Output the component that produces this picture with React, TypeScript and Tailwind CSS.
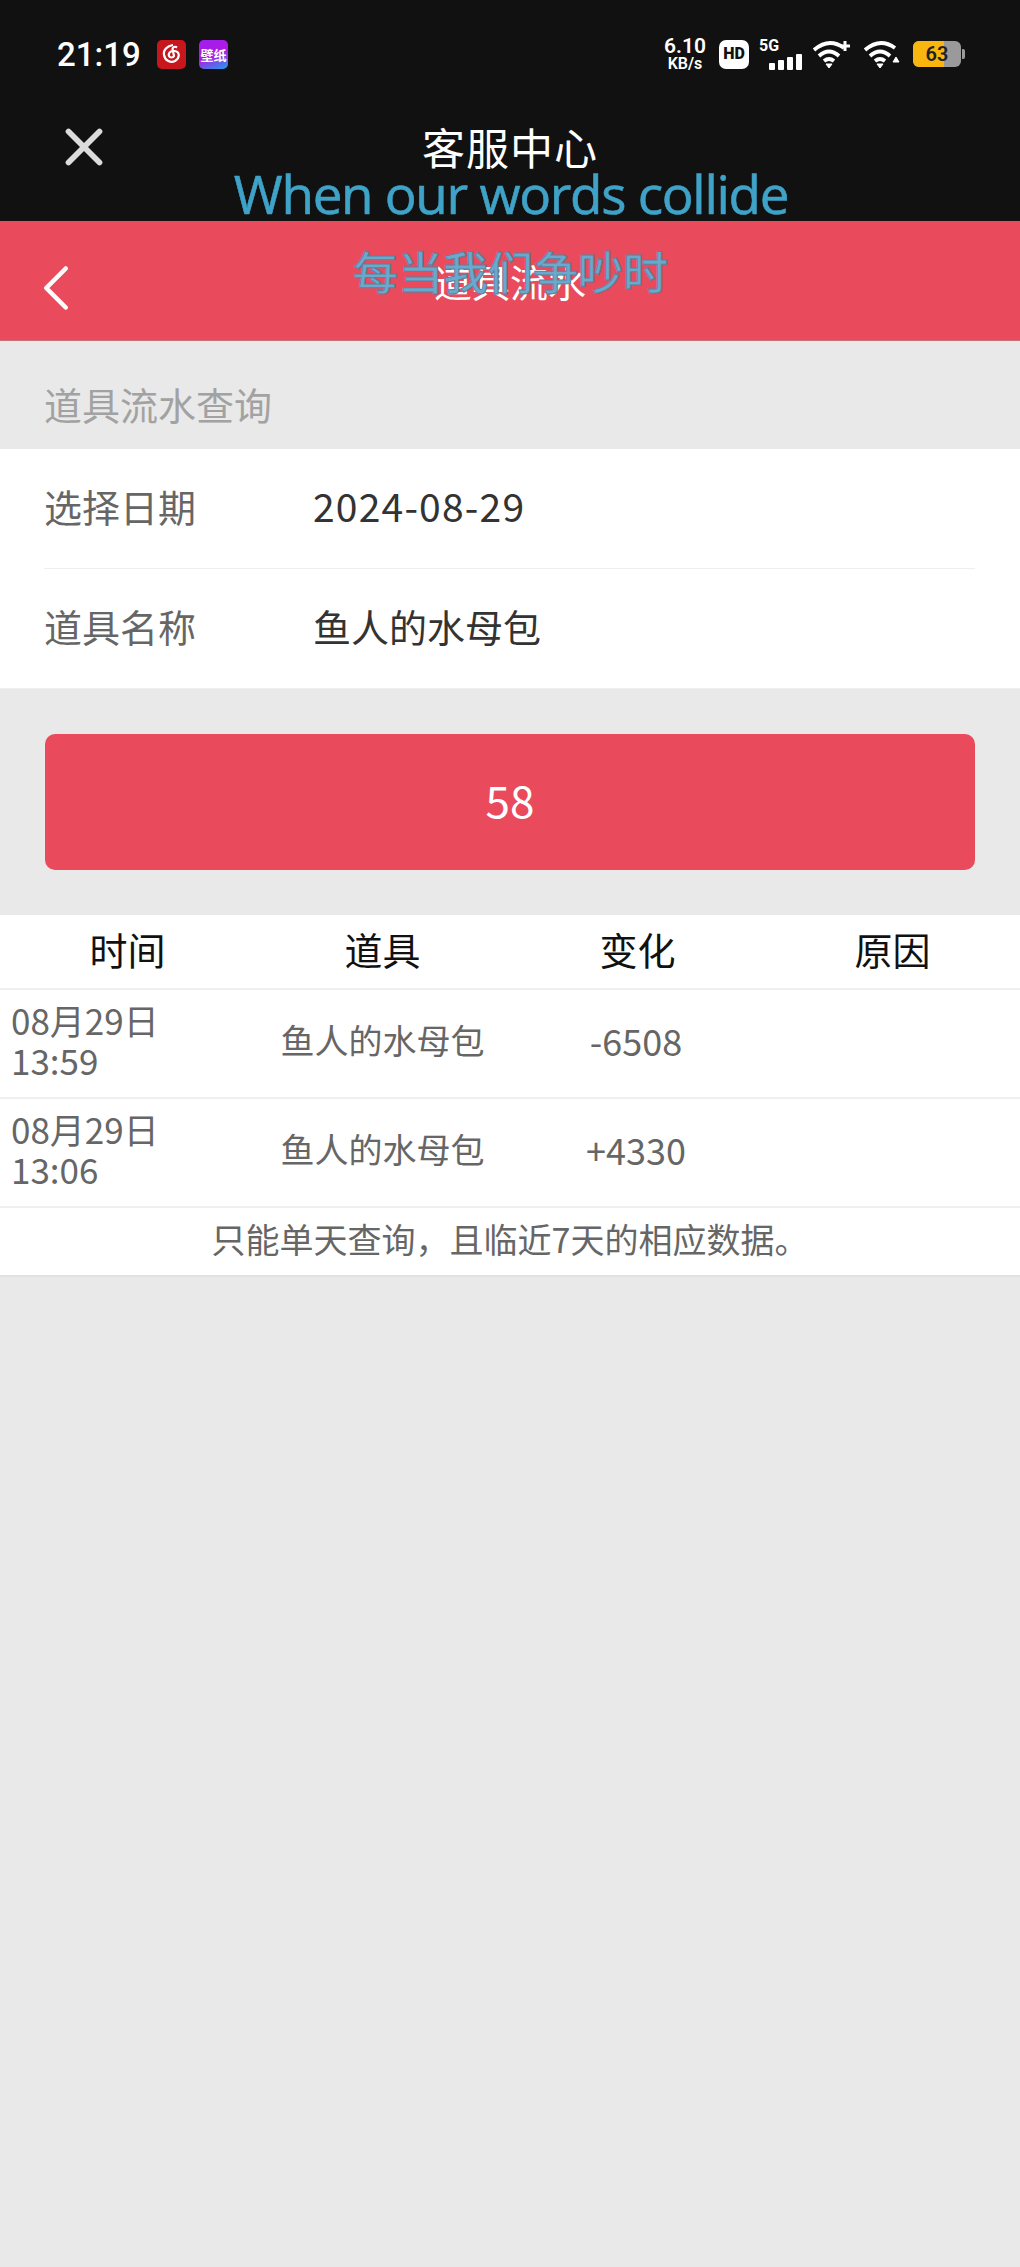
import { X, ChevronLeft } from 'lucide-react';

const FONT = 'font-["Noto_Sans_CJK_SC","Noto_Sans",sans-serif]';

// 流水记录
const rows = [
    { fecha: '08月29日', hora: '13:59', prop: '鱼人的水母包', cambio: '-6508' },
    { fecha: '08月29日', hora: '13:06', prop: '鱼人的水母包', cambio: '+4330' },
];

const Wifi = ({ extra }: { extra: 'plus' | 'arrow' }) => (
    <svg width="38" height="30" viewBox="0 0 38 30" fill="none" stroke="white" strokeWidth="3.8">
        <path d="M1 11 Q16 -2 31 9" />
        <path d="M6 17 Q16 8 26 17" />
        <path d="M11 22 Q16 18 21 22" />
        <path d="M13 25 L16 29 L19 25 Z" fill="white" strokeWidth="1" />
        {extra === 'plus' ? (
            <path d="M27 7 H37 M32 2 V12" strokeWidth="3" />
        ) : (
            <path d="M29 23 L32 18 L35 23 Z" fill="white" strokeWidth="1" />
        )}
    </svg>
);

const StatusBar = () => (
    <div className="flex items-center justify-between h-[106px] pl-[57px] pr-[55px] pt-[2px]">
        <div className="flex items-center">
            <span className="text-[33px] font-medium text-white font-['Roboto',sans-serif] w-[86px] leading-none">21:19</span>
            <div className="ml-[14px] w-[29px] h-[29px] rounded-[5px] bg-[#c8161d] flex items-center justify-center">
                <svg width="22" height="22" viewBox="0 0 22 22" fill="none" stroke="white" strokeWidth="2.2">
                    <path d="M12 2 C6 3 2 7 3 12 C4 18 10 20 14 18 C19 15 19 9 14 8 C10 7 7 10 8 13 C9 15 12 15 13 13 L11.5 6 C11.5 4 14 3 16 4.5" />
                </svg>
            </div>
            <div className="ml-[13px] w-[29px] h-[29px] rounded-[5px] bg-[linear-gradient(160deg,#a020f0_0%,#b018e0_50%,#1ea0f0_100%)] flex items-center justify-center text-[13px] leading-none font-bold text-white whitespace-nowrap">
                壁纸
            </div>
        </div>
        <div className="flex items-center">
            <div className="flex flex-col items-center text-white font-['Roboto',sans-serif] font-semibold leading-none">
                <span className="text-[21px] leading-[19px]">6.10</span>
                <span className="text-[16px] leading-[15px]">KB/s</span>
            </div>
            <div className="ml-[13px] w-[30px] h-[29px] rounded-[7px] bg-white flex items-center justify-center text-[16px] font-black text-[#111] font-['Roboto',sans-serif] leading-none">HD</div>
            <div className="ml-[10px] relative w-[43px] h-[32px]">
                <span className="absolute left-0 top-0 text-[16px] font-bold text-white leading-none font-['Roboto',sans-serif]">5G</span>
                <div className="absolute right-0 bottom-0 flex items-end gap-[3px]">
                    <div className="w-[6px] h-[7px] bg-white rounded-[1px]" />
                    <div className="w-[6px] h-[10px] bg-white rounded-[1px]" />
                    <div className="w-[6px] h-[13px] bg-white rounded-[1px]" />
                    <div className="w-[6px] h-[16px] bg-white rounded-[1px]" />
                </div>
            </div>
            <div className="ml-[11px]"><Wifi extra="plus" /></div>
            <div className="ml-[13px]"><Wifi extra="arrow" /></div>
            <div className="ml-[11px] flex items-center">
                <div className="relative w-[48px] h-[26px] rounded-[6px] bg-[#9a9a9a] overflow-hidden">
                    <div className="w-[31px] h-full bg-[#f8b60e]" />
                    <span className="absolute inset-0 flex items-center justify-center text-[20px] font-semibold text-[#222] leading-none font-['Roboto',sans-serif]">63</span>
                </div>
                <div className="w-[3px] h-[10px] bg-[#9a9a9a] rounded-r-[2px] ml-[1px]" />
            </div>
        </div>
    </div>
);

const App = () => {
    return (
        <div className={`relative w-[1020px] h-[2267px] overflow-hidden bg-[#e9e9e9] ${FONT}`}>
            <div className="h-[221px] bg-[#111112]">
                <StatusBar />
                <div className="relative h-[115px]">
                    <X className="absolute left-[53px] top-[10px] text-[#dcdcdc]" size={62} strokeWidth={2.2} />
                    <div className="absolute left-0 right-0 top-[15px] text-center text-[43px] leading-[50px] text-white tracking-[1px]">客服中心</div>
                </div>
            </div>

            {/* titulo de la pagina */}
            <div className="relative h-[120px] bg-[#e94b5c] border-b border-[#c9707b]">
                <ChevronLeft className="absolute left-[17px] top-[28px] text-white" size={78} strokeWidth={1.4} />
                <div className="absolute left-0 right-0 top-[37px] text-center text-[38px] leading-[46px] text-white">道具流水</div>
            </div>

            {/* letra flotante del reproductor */}
            <div className="absolute left-0 w-[1020px] top-[159px] text-center text-[53px] leading-[70px] text-[#3fa3c8] font-['Open_Sans',sans-serif] tracking-[-1.3px] pl-[2px] [-webkit-text-stroke:0.6px_#3fa3c8]">
                When our words collide
            </div>
            <div className="absolute left-0 w-[1020px] top-[243px] text-center text-[45px] leading-[56px] text-[#6aa9cb] pl-[1px] font-medium [-webkit-text-stroke:1px_#5d7f9f]">
                每当我们争吵时
            </div>

            <div className="h-[108px] flex items-center pl-[44px] pt-[16px] text-[38px] text-[#a2a2a2]">道具流水查询</div>

            <div className="bg-white pl-[44px] pr-[45px] border-b border-[#efefef]">
                <div className="h-[120px] pb-[6px] flex items-center border-b border-[#efefef]">
                    <span className="w-[269px] text-[38px] text-[#666]">选择日期</span>
                    <span className="text-[39px] tracking-[1.2px] text-[#333]">2024-08-29</span>
                </div>
                <div className="h-[119px] pb-[6px] flex items-center">
                    <span className="w-[269px] text-[38px] text-[#666]">道具名称</span>
                    <span className="text-[38px] text-[#333]">鱼人的水母包</span>
                </div>
            </div>

            <div className="px-[45px] pt-[45px] pb-[45px]">
                <button className="w-full h-[136px] pb-[6px] rounded-[10px] bg-[#e94b5c] text-white text-[44px] flex items-center justify-center">58</button>
            </div>

            <div className="bg-white">
                <div className="grid grid-cols-4 h-[75px] pb-[6px] items-center border-b-2 border-[#efefef] text-center text-[38px] text-[#111]">
                    <span>时间</span>
                    <span>道具</span>
                    <span>变化</span>
                    <span>原因</span>
                </div>
                {rows.map((r) => (
                    <div key={r.hora} className="grid grid-cols-4 h-[109px] pb-[7px] items-center border-b-2 border-[#efefef] text-[36px] leading-[40px] text-[#666]">
                        <div className="pl-[11px] text-[35px]">
                            <div>{r.fecha}</div>
                            <div>{r.hora}</div>
                        </div>
                        <div className="text-center text-[34px]">{r.prop}</div>
                        <div className="text-center -ml-[3px]">{r.cambio}</div>
                        <div />
                    </div>
                ))}
                <div className="h-[69px] pb-[6px] flex items-center justify-center border-b-2 border-[#e2e2e2] text-[34px] text-[#666]">
                    只能单天查询，且临近7天的相应数据。
                </div>
            </div>
        </div>
    );
};

export default App;
